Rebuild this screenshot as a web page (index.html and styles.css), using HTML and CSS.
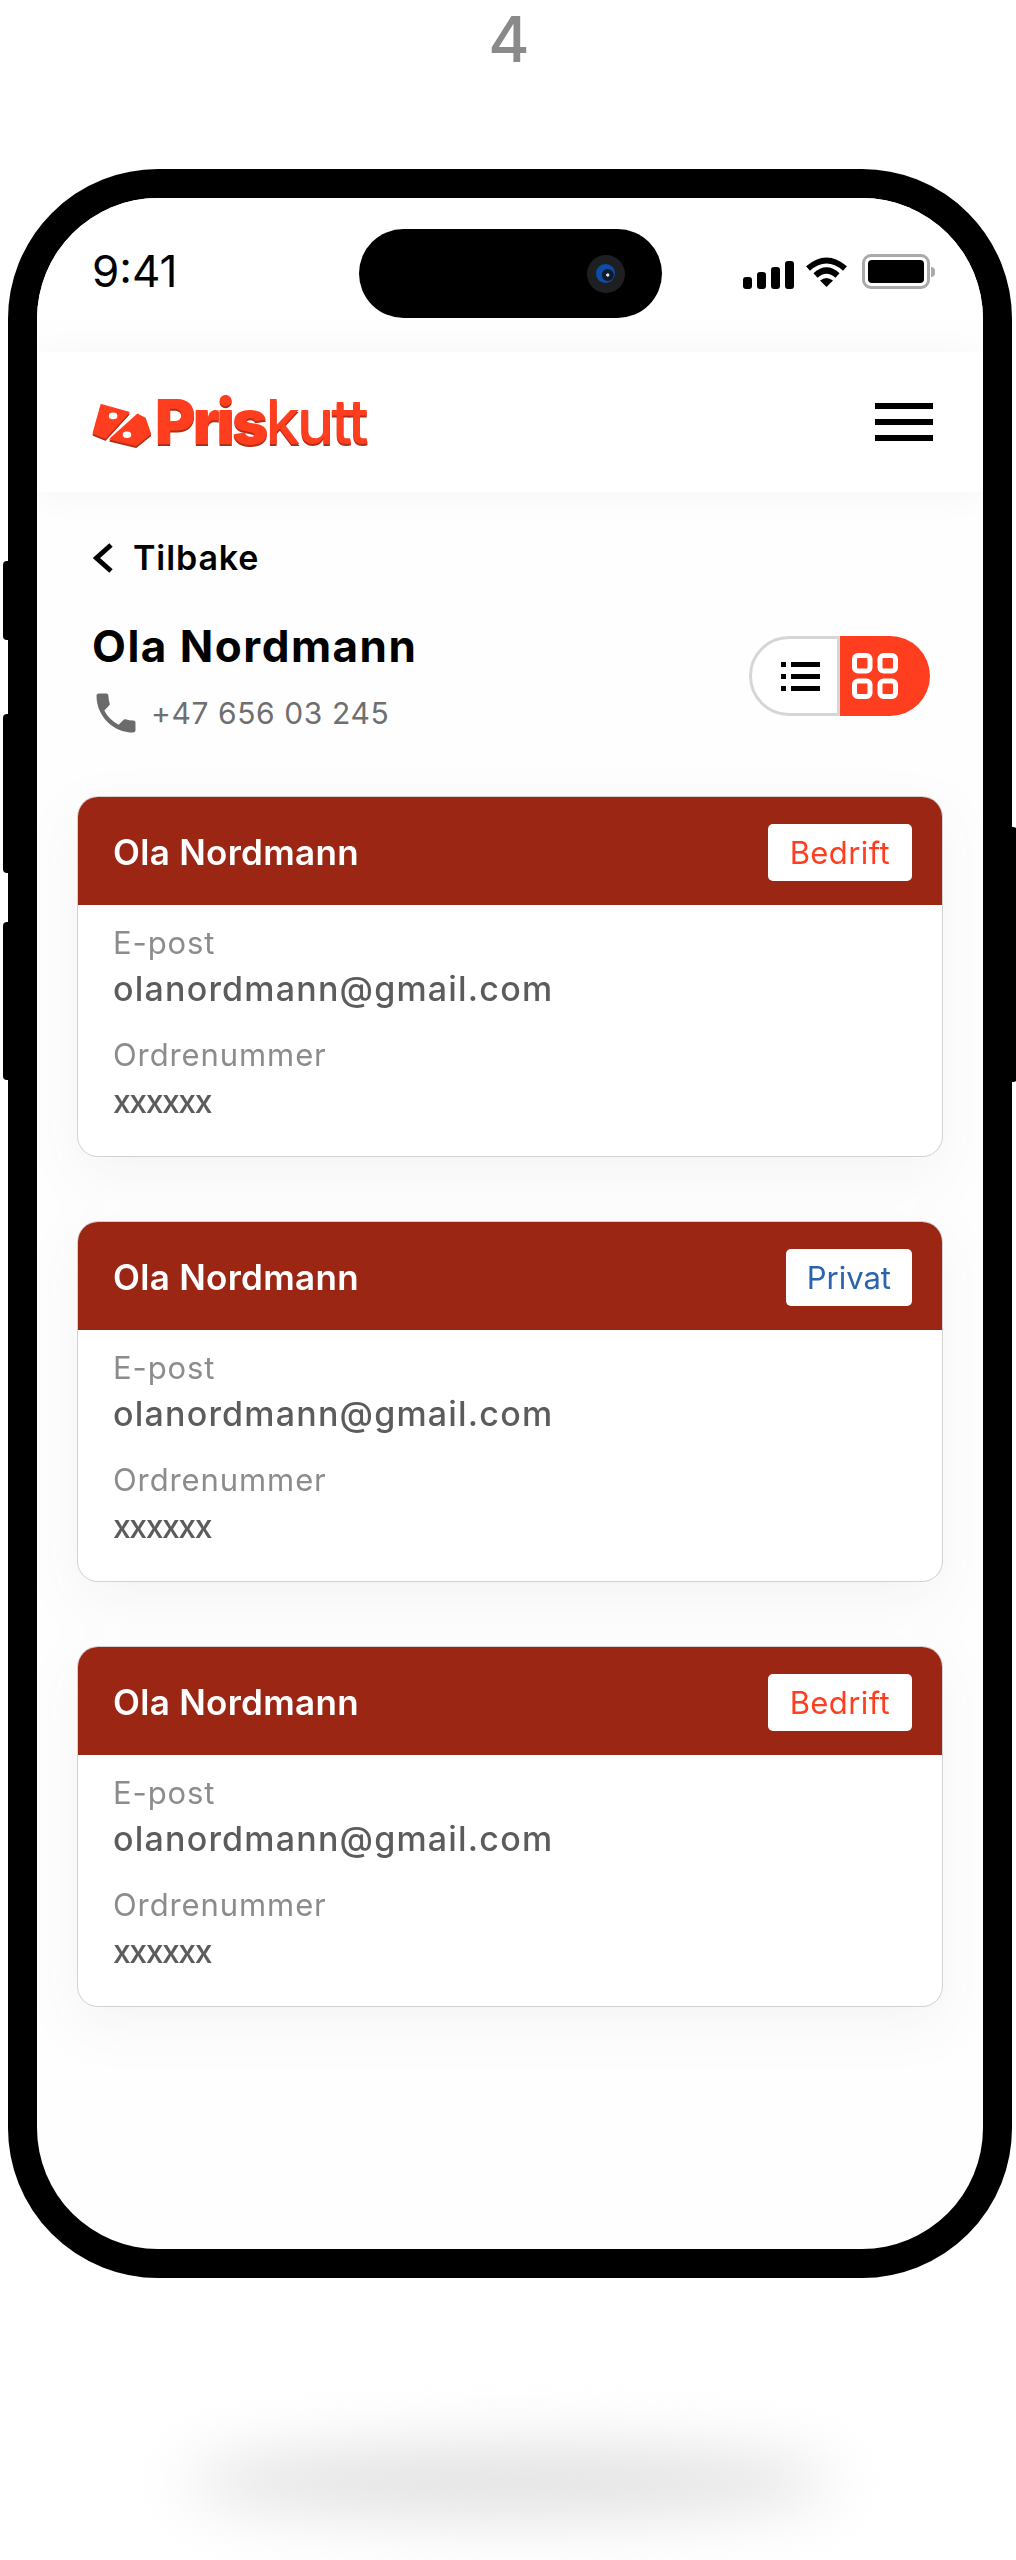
FILE: index.html
```html
<!DOCTYPE html>
<html lang="no">
<head>
<meta charset="utf-8">
<title>Priskutt</title>
<link rel="stylesheet" href="styles.css">
</head>
<body>
<main class="page">
  <div class="step">4</div>
  <div class="phone">
    <span class="side-btn side-mute"></span>
    <span class="side-btn side-up"></span>
    <span class="side-btn side-down"></span>
    <span class="side-btn side-power"></span>
    <div class="screen">
      <div class="status">
        <div class="time">9:41</div>
        <div class="island"><span class="camera"><span class="lens"></span></span></div>
        <div class="status-icons">
          <div class="signal"><i class="s1"></i><i class="s2"></i><i class="s3"></i><i class="s4"></i></div>
          <svg class="wifi" viewBox="0 0 41 30" width="41" height="30"><path d="M2 11.5Q20.5-4.500 39 11.500" fill="none" stroke="#000" stroke-width="6"/><path d="M9.500 18.500Q20.500 8.500 31.500 18.500" fill="none" stroke="#000" stroke-width="6"/><path d="M14 23.500Q20.500 18.500 27 23.500L20.500 30Z" fill="#000"/></svg>
          <div class="battery"><span class="battery-fill"></span></div>
          <span class="battery-nub"></span>
        </div>
      </div>
      <header class="app-header">
        <div class="logo">
          <svg class="logo-mark" viewBox="95 62 180 136" width="60" height="45">
            <g fill="#b32d15" transform="translate(0 6)">
              <path d="M122 67L206 90 135 168 98 153Z" stroke="#b32d15" stroke-width="4" stroke-linejoin="round"/>
              <path d="M232 96L255 108 271 155 228 190 149 171Z" stroke="#b32d15" stroke-width="4" stroke-linejoin="round"/>
            </g>
            <path d="M122 67L206 90 135 168 98 153Z" fill="#ff3d1f" stroke="#ff3d1f" stroke-width="4" stroke-linejoin="round"/>
            <path d="M232 96L255 108 271 155 228 190 149 171Z" fill="#ff3d1f" stroke="#ff3d1f" stroke-width="4" stroke-linejoin="round"/>
            <ellipse cx="158" cy="101" rx="13" ry="10" fill="#fff"/>
            <ellipse cx="200" cy="158" rx="13" ry="10" fill="#fff"/>
          </svg>
          <div class="logo-text"><span class="logo-bold">Pris</span><span class="logo-light">kutt</span></div>
        </div>
        <div class="burger"><i></i><i></i><i></i></div>
      </header>
      <section class="content">
        <div class="back">
          <svg class="chevron" viewBox="0 0 20 30" width="20" height="30"><path d="M18 2L3.500 15 18 28" fill="none" stroke="#000" stroke-width="5"/></svg>
          <span>Tilbake</span>
        </div>
        <div class="person">
          <div>
            <h1 class="person-name">Ola Nordmann</h1>
            <div class="person-phone">
              <svg viewBox="0 0 24 24" width="52" height="52"><path fill="#6b6b6b" d="M6.620 10.790c1.440 2.830 3.760 5.140 6.590 6.590l2.200-2.200c.27-.27.67-.36 1.020-.24 1.120.37 2.330.57 3.570.57.55 0 1 .45 1 1V20c0 .55-.45 1-1 1-9.390 0-17-7.610-17-17 0-.55.45-1 1-1h3.500c.55 0 1 .45 1 1 0 1.250.2 2.450.57 3.570.11.35.03.74-.25 1.020l-2.200 2.200z"/></svg>
              <span>+47 656 03 245</span>
            </div>
          </div>
          <div class="toggle">
            <div class="toggle-list">
              <svg viewBox="0 0 39 29" width="39" height="29"><path d="M0 2.500h5M10 2.500h29M0 14.500h5M10 14.500h29M0 26.500h5M10 26.500h29" stroke="#000" stroke-width="5" fill="none"/></svg>
            </div>
            <div class="toggle-grid">
              <svg viewBox="0 0 46 46" width="46" height="46"><g fill="none" stroke="#fff" stroke-width="5"><rect x="2.500" y="2.500" width="15.500" height="15.500" rx="3.500"/><rect x="28" y="2.500" width="15.500" height="15.500" rx="3.500"/><rect x="2.500" y="28" width="15.500" height="15.500" rx="3.500"/><rect x="28" y="28" width="15.500" height="15.500" rx="3.500"/></g></svg>
            </div>
          </div>
        </div>
        <div class="cards">
          <article class="card">
            <div class="card-head"><span class="card-name">Ola Nordmann</span><span class="badge badge-company">Bedrift</span></div>
            <div class="card-body">
              <div class="label">E-post</div>
              <div class="value">olanordmann@gmail.com</div>
              <div class="label label-second">Ordrenummer</div>
              <div class="value value-code">xxxxxx</div>
            </div>
          </article>
          <article class="card">
            <div class="card-head"><span class="card-name">Ola Nordmann</span><span class="badge badge-private">Privat</span></div>
            <div class="card-body">
              <div class="label">E-post</div>
              <div class="value">olanordmann@gmail.com</div>
              <div class="label label-second">Ordrenummer</div>
              <div class="value value-code">xxxxxx</div>
            </div>
          </article>
          <article class="card">
            <div class="card-head"><span class="card-name">Ola Nordmann</span><span class="badge badge-company">Bedrift</span></div>
            <div class="card-body">
              <div class="label">E-post</div>
              <div class="value">olanordmann@gmail.com</div>
              <div class="label label-second">Ordrenummer</div>
              <div class="value value-code">xxxxxx</div>
            </div>
          </article>
        </div>
      </section>
    </div>
  </div>
  <div class="ground-shadow"></div>
</main>
</body>
</html>
```
FILE: styles.css
```css
* { box-sizing: border-box; }
html, body { margin: 0; padding: 0; background: #fff; }
body { font-family: Inter, "Liberation Sans", sans-serif; color: #000; }
.page { width: 1016px; height: 2560px; overflow: hidden; display: flex; flex-direction: column; }
.step { height: 169px; padding-left: 2px; text-align: center; font-size: 63px; line-height: 78px; font-weight: 500; color: #8a8a8a; }
.phone { position: relative; width: 1004px; height: 2109px; margin-left: 8px; border: 29px solid #000; border-radius: 150px; background: #000; flex: none; }
.side-btn { position: absolute; width: 6px; background: #000; border-radius: 4px 0 0 4px; }
.side-mute { left: -34px; top: 363px; height: 79px; }
.side-up { left: -34px; top: 516px; height: 159px; }
.side-down { left: -34px; top: 724px; height: 158px; }
.side-power { right: -34px; top: 629px; height: 255px; border-radius: 0 4px 4px 0; }
.screen { height: 100%; border-radius: 121px; overflow: hidden; background: #fefefe; display: flex; flex-direction: column; }
.status { position: relative; z-index: 2; height: 122px; flex: none; background: #fff; display: grid; grid-template-columns: 1fr 303px 1fr; padding-top: 31px; }
.time { padding-left: 55px; font-size: 44px; line-height: 52px; padding-top: 16px; font-weight: 400; }
.island { height: 89px; background: #000; border-radius: 45px; display: flex; align-items: center; justify-content: flex-end; padding-right: 37px; }
.camera { width: 38px; height: 38px; border-radius: 50%; background: #1d1f22; display: flex; align-items: center; justify-content: center; }
.lens { width: 19px; height: 19px; border-radius: 50%; background: radial-gradient(circle at 62% 58%, #dfe6ee 0 8%, #101a2a 12% 34%, #0b4ea6 40%); }
.status-icons { display: flex; align-items: flex-end; height: 60px; padding-left: 81px; }
.signal { display: flex; align-items: flex-end; gap: 5px; height: 29px; }
.signal i { display: block; width: 9px; background: #000; border-radius: 3px; }
.s1 { height: 12px; }
.s2 { height: 17px; }
.s3 { height: 22px; }
.s4 { height: 28px; }
.wifi { margin-left: 12px; margin-bottom: 2px; }
.battery { width: 68px; height: 35px; margin-left: 15px; border: 3px solid #aaa; border-radius: 9px; padding: 3px; }
.battery-fill { display: block; height: 100%; background: #000; border-radius: 4px; }
.battery-nub { width: 4px; height: 10px; margin-left: 1px; margin-bottom: 12px; background: #aaa; border-radius: 0 4px 4px 0; }
.app-header { position: relative; z-index: 1; flex: none; margin-top: 32px; height: 140px; background: #fff; box-shadow: 0 3px 34px rgba(60, 60, 100, .04); display: flex; align-items: center; justify-content: space-between; padding: 0 50px 0 55px; }
.logo { display: flex; align-items: flex-end; }
.logo-mark { margin-bottom: 11px; }
.logo-text { font-size: 62px; line-height: 74px; letter-spacing: -3px; color: #ff3d1f; text-shadow: 0 2px 0 #b32d15; margin-left: 3px; }
.logo-bold { font-weight: 900; }
.logo-light { font-weight: 500; }
.burger { display: flex; flex-direction: column; gap: 10px; }
.burger i { display: block; width: 58px; height: 6px; background: #000; }
.content { flex: 1; padding: 46px 41px 0; }
.back { display: flex; align-items: center; gap: 20px; padding-left: 15px; font-size: 34px; line-height: 40px; font-weight: 600; letter-spacing: .9px; }
.person { display: flex; justify-content: space-between; margin-top: 42px; padding: 0 12px 0 14px; }
.person-name { margin: 0; font-size: 44px; line-height: 52px; font-weight: 700; letter-spacing: 1.500px; }
.person-phone { display: flex; gap: 9px; margin-top: 15px; margin-left: -2px; font-size: 30px; line-height: 52px; letter-spacing: .6px; color: #6f6f6f; }
.toggle { display: flex; width: 181px; height: 80px; margin-top: 16px; }
.toggle-list { width: 91px; display: flex; align-items: center; padding-left: 29px; background: #fff; border: 3px solid #d6d6d6; border-radius: 40px 0 0 40px; }
.toggle-grid { flex: 1; background: #ff3d1f; border-radius: 0 40px 40px 0; display: flex; align-items: center; padding-left: 12px; }
.cards { display: flex; flex-direction: column; gap: 66px; margin-top: 58px; filter: drop-shadow(0 18px 26px rgba(60, 60, 100, .05)); }
.card { height: 359px; border-radius: 20px; overflow: hidden; background: #fff; box-shadow: 0 0 0 1px #d2d2d2; }
.card-head { height: 108px; padding: 2px 30px 0 35px; background: #9c2614; display: flex; align-items: center; justify-content: space-between; }
.card-name { color: #fff; font-size: 35px; font-weight: 600; letter-spacing: .3px; }
.badge { height: 57px; padding: 0 22px; background: #fff; border-radius: 5px; display: flex; align-items: center; font-size: 31px; font-weight: 400; letter-spacing: .4px; }
.badge-company { color: #ff3d1f; }
.badge-private { padding: 0 21px; letter-spacing: 0; color: #2a63ae; }
.card-body { padding: 18px 0 0 35px; }
.label { font-size: 31px; line-height: 40px; letter-spacing: .9px; color: #8c8c8c; }
.label-second { margin-top: 26px; }
.value { margin-top: 6px; font-size: 34px; line-height: 40px; font-weight: 500; letter-spacing: 1.200px; color: #5c5c5c; }
.value-code { margin-top: 7px; font-size: 32px; letter-spacing: -1.500px; }
.ground-shadow { width: 650px; height: 74px; margin: 167px 0 0 185px; border-radius: 50%; background: #e2e2e2; filter: blur(30px); flex: none; }
```
